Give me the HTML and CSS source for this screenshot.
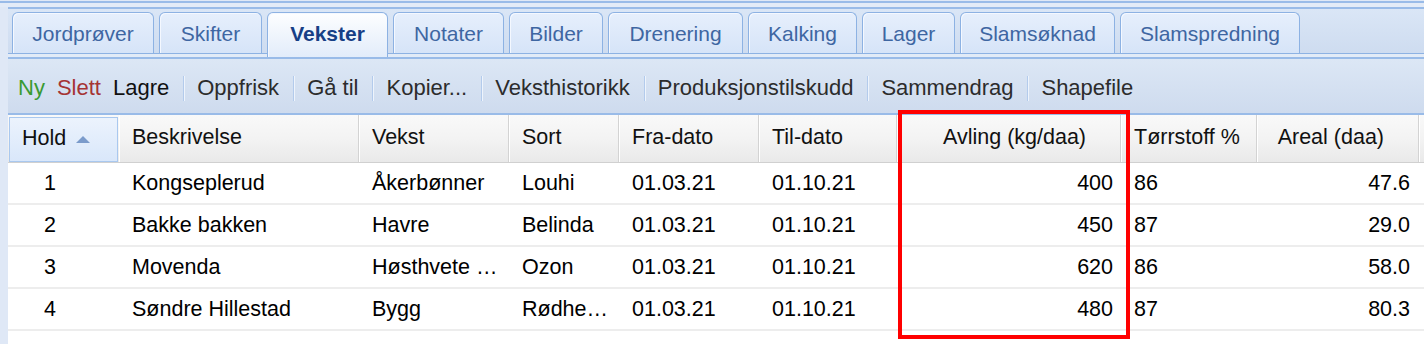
FILE: index.html
```html
<!DOCTYPE html>
<html lang="no">
<head>
<meta charset="utf-8">
<title>Vekster</title>
<link rel="stylesheet" href="styles.css">
</head>
<body>
<div class="page">
  <div class="topline"></div>
  <div class="topgap"></div>
  <div class="panel">
    <div class="tabstrip">
      <div class="tab t1">Jordprøver</div>
      <div class="tab t2">Skifter</div>
      <div class="tab t3 active">Vekster</div>
      <div class="tab t4">Notater</div>
      <div class="tab t5">Bilder</div>
      <div class="tab t6">Drenering</div>
      <div class="tab t7">Kalking</div>
      <div class="tab t8">Lager</div>
      <div class="tab t9">Slamsøknad</div>
      <div class="tab t10">Slamspredning</div>
    </div>
    <div class="spacer"></div>
    <div class="toolbar">
      <span class="btn green">Ny</span>
      <span class="btn red">Slett</span>
      <span class="btn black">Lagre</span>
      <span class="sep"></span>
      <span class="btn">Oppfrisk</span>
      <span class="sep"></span>
      <span class="btn">Gå til</span>
      <span class="sep"></span>
      <span class="btn">Kopier...</span>
      <span class="sep"></span>
      <span class="btn">Veksthistorikk</span>
      <span class="sep"></span>
      <span class="btn">Produksjonstilskudd</span>
      <span class="sep"></span>
      <span class="btn">Sammendrag</span>
      <span class="sep"></span>
      <span class="btn">Shapefile</span>
    </div>
    <div class="grid">
      <div class="row head">
        <div class="hd sorted">Hold<span class="arrow"></span></div>
        <div class="hd">Beskrivelse</div>
        <div class="hd">Vekst</div>
        <div class="hd">Sort</div>
        <div class="hd">Fra-dato</div>
        <div class="hd">Til-dato</div>
        <div class="hd right">Avling (kg/daa)</div>
        <div class="hd">Tørrstoff %</div>
        <div class="hd right">Areal (daa)</div>
        <div class="hd"></div>
      </div>
      <div class="row">
        <div class="cell num">1</div>
        <div class="cell">Kongseplerud</div>
        <div class="cell">Åkerbønner</div>
        <div class="cell">Louhi</div>
        <div class="cell">01.03.21</div>
        <div class="cell">01.10.21</div>
        <div class="cell right">400</div>
        <div class="cell">86</div>
        <div class="cell right r2">47.6</div>
        <div class="cell"></div>
      </div>
      <div class="row">
        <div class="cell num">2</div>
        <div class="cell">Bakke bakken</div>
        <div class="cell">Havre</div>
        <div class="cell">Belinda</div>
        <div class="cell">01.03.21</div>
        <div class="cell">01.10.21</div>
        <div class="cell right">450</div>
        <div class="cell">87</div>
        <div class="cell right r2">29.0</div>
        <div class="cell"></div>
      </div>
      <div class="row">
        <div class="cell num">3</div>
        <div class="cell">Movenda</div>
        <div class="cell">Høsthvete …</div>
        <div class="cell">Ozon</div>
        <div class="cell">01.03.21</div>
        <div class="cell">01.10.21</div>
        <div class="cell right">620</div>
        <div class="cell">86</div>
        <div class="cell right r2">58.0</div>
        <div class="cell"></div>
      </div>
      <div class="row">
        <div class="cell num">4</div>
        <div class="cell">Søndre Hillestad</div>
        <div class="cell">Bygg</div>
        <div class="cell">Rødhe…</div>
        <div class="cell">01.03.21</div>
        <div class="cell">01.10.21</div>
        <div class="cell right">480</div>
        <div class="cell">87</div>
        <div class="cell right r2">80.3</div>
        <div class="cell"></div>
      </div>
      <div class="grid-rest"></div>
    </div>
  </div>
  <div class="highlight"></div>
</div>
</body>
</html>
```

FILE: styles.css
```css
* { box-sizing: border-box; }

body {
  margin: 0;
  background: #dfe8f6;
  font-family: "Liberation Sans", Arial, Helvetica, sans-serif;
}

.page {
  position: relative;
  width: 1424px;
  height: 344px;
  overflow: hidden;
  padding-top: 1px;
  background: #dfe8f6;
}

.topline {
  height: 2px;
  background: #99bbe8;
}

.topgap {
  height: 4px;
  background: #e3ebf7;
}

.panel {
  margin-left: 8px;
  display: flex;
  flex-direction: column;
  height: 337px;
}

.tabstrip {
  height: 47px;
  border-top: 2px solid #99bbe8;
  border-bottom: 1px solid #8db2e3;
  background: linear-gradient(#dae6f6, #cedcf0);
  padding: 3px 0 0 4px;
  display: flex;
  align-items: flex-end;
  gap: 5px;
}

.tab {
  height: 41px;
  border: 1px solid #8db2e3;
  border-bottom: none;
  border-radius: 6px 6px 0 0;
  background: linear-gradient(#e6effc, #d6e4f8);
  box-shadow: inset 1px 1px 0 #f4f8ff;
  color: #3e66a2;
  font-size: 21px;
  line-height: 41px;
  text-align: center;
  white-space: nowrap;
}

.t1 { width: 142px; }
.t2 { width: 103px; }
.t3 { width: 121px; }
.t4 { width: 111px; }
.t5 { width: 94px; }
.t6 { width: 135px; }
.t7 { width: 109px; }
.t8 { width: 93px; }
.t9 { width: 155px; }
.t10 { width: 180px; }

.tab.active {
  position: relative;
  z-index: 1;
  height: 45px;
  margin-bottom: -4px;
  background: linear-gradient(#fdfeff, #e2ecfa);
  color: #173f86;
  font-weight: bold;
  line-height: 41px;
}

.spacer {
  height: 3px;
  background: #e2ebf7;
}

.toolbar {
  height: 58px;
  border-top: 2px solid #99bbe8;
  border-bottom: 2px solid #99bbe8;
  background: linear-gradient(#dce7f5, #cedbee);
  padding: 4px 0 0 10px;
  display: flex;
  align-items: center;
  font-size: 22px;
  color: #2c2c2c;
  white-space: nowrap;
}

.btn { margin-right: 12px; }
.btn.green { color: #3a9a32; }
.btn.red { color: #a53434; }
.btn.black { color: #111; }

.sep {
  width: 2px;
  height: 25px;
  margin: 0 12px 0 2px;
  background: #b3cbec;
  border-right: 1px solid #eef4fc;
}

.grid {
  flex: 1;
  background: #fff;
  font-size: 21.5px;
  color: #000;
}

.row {
  display: grid;
  grid-template-columns: 111px 240px 150px 110px 140px 138px 224px 136px 162px 1fr;
  height: 42px;
  border-bottom: 2px solid #ededed;
  background: #fff;
}

.row.head {
  height: 48px;
  border-bottom: 1px solid #d0d0d0;
  background: linear-gradient(#f9f9f9 0%, #f3f3f3 50%, #e9e9e9 100%);
}

.hd {
  display: flex;
  align-items: center;
  padding: 0 0 2px 13px;
  border-right: 1px solid #d3d3d3;
  box-shadow: inset 1px 0 0 #fff;
  color: #111;
  white-space: nowrap;
}

.hd.right {
  justify-content: flex-end;
  padding-right: 34px;
}

.hd.sorted {
  margin: 2px 1px 0 1px;
  padding-left: 12px;
  border: 1px solid #a9c8ef;
  background: linear-gradient(#ecf3fd, #d9e7fa);
  box-shadow: none;
}

.arrow {
  width: 0;
  height: 0;
  margin-left: 10px;
  margin-top: 2px;
  border-left: 7px solid transparent;
  border-right: 7px solid transparent;
  border-bottom: 7px solid #7b9bcb;
}

.cell {
  display: flex;
  align-items: center;
  padding: 0 0 0 13px;
  white-space: nowrap;
  overflow: hidden;
}

.cell.num { padding-left: 36px; }

.cell.right {
  justify-content: flex-end;
  padding-right: 8px;
}

.cell.r2 { padding-right: 9px; }

.grid-rest {
  background: #fff;
}

.highlight {
  position: absolute;
  left: 898px;
  top: 110px;
  width: 232px;
  height: 229px;
  border: 4px solid #ff0000;
}
```
